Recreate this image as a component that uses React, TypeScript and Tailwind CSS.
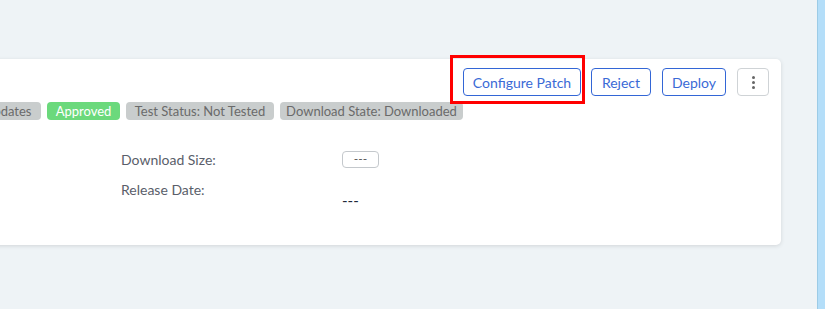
import React from "react";

const font = { fontFamily: "Lato, 'Open Sans', sans-serif" };

function Badge({ children, green, w }: { children: React.ReactNode; green?: boolean; w: string }) {
  return (
    <span
      className={
        "h-[18px] rounded-[4px] text-[13px] leading-[18px] whitespace-nowrap text-center shrink-0 " +
        w +
        " " +
        (green ? "bg-[#6bd97c] text-white" : "bg-[#c9cdcd] text-[#6a6a6a]")
      }
    >
      {children}
    </span>
  );
}

export default function App() {
  return (
    <div className="w-[825px] h-[309px] flex bg-[#eef3f6] overflow-hidden" style={font}>
      <div className="w-[817px] pt-[59px] overflow-hidden">
        <div className="ml-[-300px] w-[1081px] h-[186px] bg-white rounded-[5px] shadow-[0_1px_4px_rgba(0,0,0,0.12)] flex flex-col">
          <div className="flex">
            <div className="w-[764px] pt-[43px] flex justify-end gap-[6px]">
              <Badge w="w-[110px]">Critical Updates</Badge>
              <Badge green w="w-[73px]">Approved</Badge>
              <Badge w="w-[148px]">Test Status: Not Tested</Badge>
              <Badge w="w-[183px]">Download State: Downloaded</Badge>
            </div>
            <div className="flex-1 flex items-start justify-end pr-[12px] pt-[9px]">
              <div className="relative">
                <div className="absolute left-[-13px] top-[-13px] w-[135px] h-[49px] border-[3px] border-[#ff0000] pointer-events-none" />
                <button className="h-[28px] w-[118px] border border-[#3366d6] rounded-[4px] text-[#3a6ad6] text-[14px]">
                  Configure Patch
                </button>
              </div>
              <button className="ml-[10px] h-[28px] w-[60px] border border-[#3366d6] rounded-[4px] text-[#3a6ad6] text-[14px]">
                Reject
              </button>
              <button className="ml-[11px] h-[28px] w-[64px] border border-[#3366d6] rounded-[4px] text-[#3a6ad6] text-[14px]">
                Deploy
              </button>
              <button className="ml-[11px] h-[28px] w-[32px] border border-[#cfd3d6] rounded-[4px] flex flex-col items-center justify-center gap-[2px]">
                <span className="w-[3px] h-[3px] rounded-full bg-[#666]" />
                <span className="w-[3px] h-[3px] rounded-full bg-[#666]" />
                <span className="w-[3px] h-[3px] rounded-full bg-[#666]" />
              </button>
            </div>
          </div>
          <div className="flex pl-[421px] pt-[31px]">
            <div className="w-[221px] flex flex-col gap-[12px] text-[14px] text-[#5a5e6a]">
              <div className="h-[18px] leading-[18px]">Download Size:</div>
              <div className="h-[18px] leading-[18px]">Release Date:</div>
            </div>
            <div className="flex flex-col">
              <div className="w-[37px] h-[17px] border border-[#c4c8cc] rounded-[4px] text-[12px] leading-[14px] text-center text-[#555]">
                ---
              </div>
              <div className="mt-[23px] text-[15px] leading-[18px] text-[#222a3a]">---</div>
            </div>
          </div>
        </div>
      </div>
      <div className="w-[1px] bg-[#9ccbe6]" />
      <div className="flex-1 bg-[#b4def9]" />
    </div>
  );
}
